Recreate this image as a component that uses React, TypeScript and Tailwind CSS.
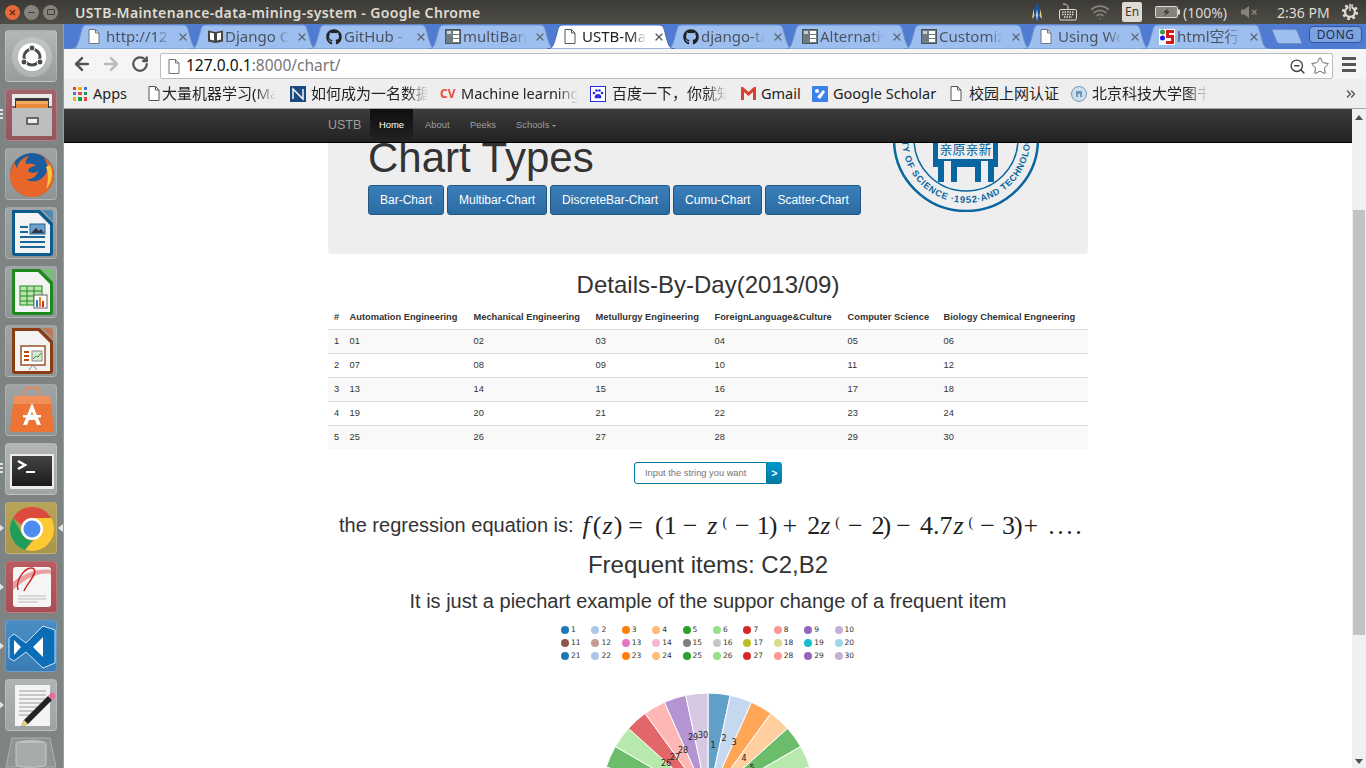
import type { ReactNode } from "react";
import { ArrowLeft, ArrowRight, RotateCw, ZoomOut, Star, Wifi, X, Minus, ChevronsRight } from "lucide-react";
import { FaGithub } from "react-icons/fa";

const COLORS = ["#1f77b4", "#aec7e8", "#ff7f0e", "#ffbb78", "#2ca02c", "#98df8a", "#d62728", "#ff9896", "#9467bd", "#c5b0d5", "#8c564b", "#c49c94", "#e377c2", "#f7b6d2", "#7f7f7f", "#c7c7c7", "#bcbd22", "#dbdb8d", "#17becf", "#9edae5"];

const pieColor = (n: number) => COLORS[(n - 1) % 20];

function PageIcon({ dark = false }: { dark?: boolean }) {
  return (
    <svg width="12" height="15" viewBox="0 0 12 15" className="shrink-0">
      <path d="M1 .5h6.5L11 4v10.5H1z" fill="#fff" stroke={dark ? "#555" : "#6d7480"} />
      <path d="M7.5.5V4H11" fill="none" stroke={dark ? "#555" : "#6d7480"} />
    </svg>
  );
}

function BookIcon() {
  return (
    <svg width="17" height="15" viewBox="0 0 17 15" className="shrink-0">
      <path d="M1 1.5l7.5 1.5L16 1.5v11L8.5 14 1 12.5z" fill="#444" />
      <path d="M3 3.5l4 1v7l-4-1zM14 3.5l-4 1v7l4-1z" fill="#fff" />
    </svg>
  );
}

function ColumnsIcon() {
  return (
    <svg width="16" height="15" viewBox="0 0 16 15" className="shrink-0">
      <rect x=".5" y=".5" width="15" height="14" fill="#6f7a82" stroke="#4b555c" />
      <rect x="8" y="2" width="6" height="3" fill="#fff" />
      <rect x="8" y="6" width="6" height="3" fill="#fff" />
      <rect x="8" y="10" width="6" height="3" fill="#fff" />
      <rect x="2" y="2" width="4" height="3" fill="#c9d0d4" />
    </svg>
  );
}

function H5Icon() {
  return (
    <svg width="16" height="16" viewBox="0 0 16 16" className="shrink-0">
      <rect width="16" height="16" fill="#fff" />
      <circle cx="3.5" cy="3" r="2.5" fill="#3c9a3c" />
      <circle cx="3.5" cy="9" r="2.5" fill="#1c1cd8" />
      <path d="M7 1h8v3h-5v2h5v9H7v-3h5V9H7z" fill="#d81818" />
    </svg>
  );
}

const TABS: { label: string; icon: ReactNode; active?: boolean }[] = [
  { label: "http://12", icon: <PageIcon /> },
  { label: "Django O", icon: <BookIcon /> },
  { label: "GitHub - a", icon: <FaGithub size={16} color="#222" /> },
  { label: "multiBar(", icon: <ColumnsIcon /> },
  { label: "USTB-Mai", icon: <PageIcon dark />, active: true },
  { label: "django-ta", icon: <FaGithub size={16} color="#222" /> },
  { label: "Alternativ", icon: <ColumnsIcon /> },
  { label: "Customiz", icon: <ColumnsIcon /> },
  { label: "Using We", icon: <PageIcon /> },
  { label: "html空行", icon: <H5Icon /> },
];

function Tab({ label, icon, active }: { label: string; icon: ReactNode; active?: boolean }) {
  return (
    <div className={`relative -ml-[9px] flex h-[25px] w-[128px] shrink-0 items-center pl-[17px] ${active ? "z-10" : ""}`}>
      <svg width="128" height="25" viewBox="0 0 128 25" className="absolute left-0 top-0">
        <path d="M0 25c5 0 6-3 8-9l3-11c1-3 2-4 5-4h96c3 0 4 1 5 4l3 11c2 6 3 9 8 9z" fill={active ? "#ffffff" : "#9dbff0"} stroke={active ? "#3f66b8" : "#6f90c8"} />
      </svg>
      <span className="relative flex w-[18px] items-center">{icon}</span>
      <span className={`relative w-[64px] overflow-hidden whitespace-nowrap text-[15px] [mask-image:linear-gradient(to_right,black_78%,transparent)] ${active ? "text-[#222]" : "text-[#4c5360]"}`}>
        {label}
      </span>
      <X size={12} strokeWidth={2.5} className={`relative ml-[7px] ${active ? "text-[#555]" : "text-[#5d6675]"}`} />
    </div>
  );
}

function TopBar() {
  return (
    <div className="flex h-[24px] shrink-0 items-center bg-gradient-to-b from-[#3b3a36] to-[#4e4d46] text-[#dfdbd2]">
      <div className="ml-[5px] flex w-[57px] gap-[4px]">
        <div className="flex h-[15px] w-[15px] items-center justify-center rounded-full bg-[#e9693a]">
          <X size={9} strokeWidth={3} className="text-[#5b2a17]" />
        </div>
        <div className="flex h-[15px] w-[15px] items-center justify-center rounded-full bg-[#85837b]">
          <Minus size={9} strokeWidth={3} className="text-[#3d3c38]" />
        </div>
        <div className="flex h-[15px] w-[15px] items-center justify-center rounded-full bg-[#85837b]">
          <div className="h-[6px] w-[8px] rounded-[1px] border border-[#3d3c38]" />
        </div>
      </div>
      <div className="ml-[13px] w-[956px] text-[14px] font-semibold tracking-[0.35px]">USTB-Maintenance-data-mining-system - Google Chrome</div>
      <svg width="14" height="22" viewBox="0 0 14 22" className="-ml-[1px]">
        <path d="M7 1l3 7-1 10-2 3-2-3-1-10z" fill="#1c4f96" />
        <path d="M7 8l1 6-1 6-1-6z" fill="#cfe0f0" />
        <path d="M3.500 8L2 18l2.500-3zM10.500 8L12 18l-2.500-3z" fill="#e8d090" />
      </svg>
      <svg width="20" height="18" viewBox="0 0 20 18" className="ml-[14px]">
        <path d="M5 1c3 0 5 1 5 3v2" fill="none" stroke="#dfdbd2" />
        <rect x="1.500" y="6.500" width="17" height="10.500" rx="1.500" fill="none" stroke="#dfdbd2" />
        <path d="M4 9h12M4 11.500h12M6 14h8" stroke="#dfdbd2" strokeWidth="1.500" strokeDasharray="1.500 1" />
      </svg>
      <Wifi size={20} strokeWidth={2} className="ml-[12px] text-[#85837b]" />
      <div className="ml-[12px] flex h-[20px] w-[20px] items-center justify-center rounded-[2px] bg-[#dfdbd2] text-[12px] text-[#3c3b37]">En</div>
      <svg width="25" height="12" viewBox="0 0 25 12" className="ml-[13px]">
        <rect x=".5" y=".5" width="22" height="11" rx="1" fill="#85837b" stroke="#dfdbd2" />
        <rect x="23" y="3.500" width="2" height="5" fill="#dfdbd2" />
        <path d="M14 2l-6 4.500h3.500L9 10l6-4.500h-3.500z" fill="#2e2d2a" />
      </svg>
      <div className="ml-[3px] text-[14px]">(100%)</div>
      <svg width="18" height="14" viewBox="0 0 18 14" className="ml-[14px]">
        <path d="M0 4.500h3L8 1v12L3 9.500H0z" fill="#85837b" />
        <path d="M11 5l4.500 4.500M15.500 5L11 9.500" stroke="#85837b" strokeWidth="1.500" />
      </svg>
      <div className="ml-[18px] text-[14px]">2:36 PM</div>
      <svg width="18" height="18" viewBox="0 0 20 20" className="ml-[11px]">
        <circle cx="10" cy="10" r="5.500" fill="none" stroke="#dfdbd2" strokeWidth="2.500" />
        <circle cx="10" cy="10" r="7.500" fill="none" stroke="#dfdbd2" strokeWidth="3" strokeDasharray="3 2.900" />
        <rect x="8.500" y="1" width="3" height="8" fill="#45443f" />
        <rect x="9.200" y="1" width="1.600" height="8" fill="#dfdbd2" />
      </svg>
    </div>
  );
}

const DOCK_BG: string[] = ["from-[#b3b7b7] to-[#979c9c]", "from-[#a0646c] to-[#94545c]", "from-[#a0a4a4] to-[#8f9494]", "from-[#a0a4a4] to-[#8f9494]", "from-[#a0a4a4] to-[#8f9494]", "from-[#a0a4a4] to-[#8f9494]", "from-[#a0a4a4] to-[#8f9494]", "from-[#b3b5b5] to-[#a2a5a5]", "from-[#b8a458] to-[#a8964c]", "from-[#b85c62] to-[#a84e54]", "from-[#4a8cc4] to-[#3a7cb6]", "from-[#b0b3b3] to-[#a0a3a3]"];

const DOCK_PIP: ("bars" | "left" | "both" | null)[] = [null, "bars", null, null, null, null, null, "bars", "both", "left", "left", "left"];

function DocIcon({ main, fold, children }: { main: string; fold: string; children: ReactNode }) {
  return (
    <svg width="52" height="52" viewBox="0 0 52 52">
      <path d="M6 2h28l13 13v30a3 3 0 0 1-3 3H9a3 3 0 0 1-3-3z" fill={main} />
      <path d="M36 2h9a2 2 0 0 1 2 2v9z" fill={fold} />
      <path d="M9 5h23l12 12v28H9z" fill="#f3f3f3" />
      {children}
    </svg>
  );
}

const DOCK_ICONS: ReactNode[] = [
  <svg width="52" height="52" viewBox="0 0 52 52" key="ubuntu">
    <circle cx="26" cy="26" r="20" fill="#e8eaea" opacity=".3" />
    <circle cx="26" cy="26" r="14" fill="#fff" />
    <circle cx="26" cy="26" r="8" fill="none" stroke="#4a4a4a" strokeWidth="3" />
    <circle cx="26" cy="17" r="3" fill="#4a4a4a" stroke="#fff" />
    <circle cx="18" cy="31" r="3" fill="#4a4a4a" stroke="#fff" />
    <circle cx="34" cy="31" r="3" fill="#4a4a4a" stroke="#fff" />
  </svg>,
  <svg width="52" height="52" viewBox="0 0 52 52" key="files">
    <path d="M6 4h40v12H6z" fill="#e8e8e8" />
    <path d="M9 8h34v10H9z" fill="#3a3a3a" />
    <path d="M10 11h32v8H10z" fill="#f4a860" />
    <path d="M10 14h32v5H10z" fill="#e98b3a" />
    <path d="M6 18h40v28H6z" fill="#bdbfbf" />
    <rect x="20" y="27" width="13" height="8" rx="1" fill="#666" />
    <rect x="22" y="29" width="9" height="4" fill="#eee" />
  </svg>,
  <svg width="52" height="52" viewBox="0 0 52 52" key="firefox">
    <circle cx="26" cy="26" r="22" fill="#1b5c9e" />
    <path d="M30 4c10 3 18 12 18 22 0 13-10 22-22 22S4 39 4 27c0-6 2-10 5-14 0 3 1 5 2 6 1-6 6-11 12-12-3 3-4 6-3 8 3-1 8-1 10 2-3 0-7 1-8 5 3 3 7 2 10 0-1 5-6 9-12 8 5 4 14 3 19-4 4-6 2-13-1-17 1-1-3-5-8-5z" fill="#e8662a" />
    <path d="M44 16c4 8 2 18-4 24 2-6 3-14 0-22z" fill="#f8c63a" />
  </svg>,
  <DocIcon main="#0e5c8e" fold="#4f8cb4" key="writer">
    <rect x="14" y="18" width="8" height="2" fill="#1a6698" />
    <rect x="14" y="23" width="8" height="2" fill="#1a6698" />
    <rect x="14" y="28" width="25" height="2" fill="#1a6698" />
    <rect x="14" y="33" width="25" height="2" fill="#1a6698" />
    <rect x="14" y="38" width="25" height="2" fill="#1a6698" />
    <rect x="24" y="16" width="15" height="10" fill="#6ea0cc" stroke="#1a6698" />
    <path d="M25 25l5-5 3 3 2-2 3 4z" fill="#334" />
  </DocIcon>,
  <DocIcon main="#1d8a1d" fold="#71c271" key="calc">
    <rect x="14" y="19" width="22" height="19" fill="#b9e4b0" stroke="#1d8a1d" />
    <path d="M14 24h22M14 29h22M14 34h22M21 19v19M28 19v19" stroke="#1d8a1d" fill="none" />
    <rect x="28" y="28" width="13" height="13" fill="#fff" stroke="#666" />
    <rect x="30" y="33" width="2" height="7" fill="#2a7ac8" />
    <rect x="33" y="30" width="2" height="10" fill="#e87a2a" />
    <rect x="36" y="34" width="2" height="6" fill="#c8382a" />
  </DocIcon>,
  <DocIcon main="#8a3d14" fold="#bb7a55" key="impress">
    <rect x="15" y="20" width="24" height="19" fill="#fff" stroke="#a0502a" strokeWidth="1.5" />
    <rect x="18" y="25" width="5" height="2" fill="#c04a14" />
    <rect x="18" y="29" width="5" height="2" fill="#c04a14" />
    <rect x="18" y="33" width="5" height="2" fill="#c04a14" />
    <rect x="26" y="25" width="10" height="10" fill="#dbe7d5" stroke="#888" />
    <path d="M27 33l3-3 2 1 3-4" stroke="#2a9a2a" fill="none" />
    <path d="M27 39l-4 5M27 39l4 5" stroke="#888" />
  </DocIcon>,
  <svg width="52" height="52" viewBox="0 0 52 52" key="store">
    <path d="M19 13V6a3 3 0 0 1 3-3h8a3 3 0 0 1 3 3v7" fill="none" stroke="#e88a5a" strokeWidth="2" />
    <path d="M8 11h36l4 33a3 3 0 0 1-3 3H7a3 3 0 0 1-3-3z" fill="#ec7434" />
    <path d="M8 11h36l1 8H7z" fill="#f08f57" />
    <path d="M26 18l-9 22h4l2-5h6l2 5h4zM25 30l1-4 1 4z" fill="#fff" />
    <rect x="17" y="30" width="18" height="2.5" fill="#fff" />
  </svg>,
  <svg width="52" height="52" viewBox="0 0 52 52" key="terminal">
    <rect x="4" y="10" width="44" height="35" rx="1" fill="#ececec" />
    <rect x="6" y="12" width="40" height="30" fill="url(#termFill)" />
    <defs>
      <linearGradient id="termFill" x1="0" y1="0" x2="0" y2="1">
        <stop offset="0" stopColor="#444" />
        <stop offset="1" stopColor="#1a1a1a" />
      </linearGradient>
    </defs>
    <path d="M12 17l7 4-7 4" stroke="#fff" strokeWidth="2.5" fill="none" />
    <rect x="20" y="27" width="9" height="2" fill="#fff" />
  </svg>,
  <svg width="52" height="52" viewBox="0 0 52 52" key="chrome">
    <path d="M26 4a22 22 0 0 1 19 11H26a11 11 0 0 0-10 7L7 15A22 22 0 0 1 26 4z" fill="#dd4b3e" />
    <path d="M7 15l9 16a11 11 0 0 0 10 6l-7 10A22 22 0 0 1 7 15z" fill="#1f9e5a" />
    <path d="M45 15a22 22 0 0 1-19 33l-7-1 10-11a11 11 0 0 0 6-8 11 11 0 0 0-9-13z" fill="#fcc934" />
    <circle cx="26" cy="26" r="11" fill="#fff" />
    <circle cx="26" cy="26" r="8.5" fill="#4e8cf0" />
  </svg>,
  <svg width="52" height="52" viewBox="0 0 52 52" key="reader">
    <rect x="7" y="5" width="38" height="40" rx="3" fill="#f5f5f5" />
    <path d="M45 12C33 10 20 16 7 28v-8C20 10 33 6 45 8z" fill="#e8a0a0" />
    <path d="M12 28C9 16 22 2 28 7c4 4-8 16-10 22" fill="none" stroke="#cc2a2a" strokeWidth="1.5" />
    <path d="M12 34h28M12 37h28M12 40h20" stroke="#bbb" />
  </svg>,
  <svg width="52" height="52" viewBox="0 0 52 52" key="vscode">
    <path d="M3 17l5-4 12 9 17-17 12 4v33l-12 5-17-16-12 9-5-3z" fill="#0a6db5" stroke="#cfe3f2" />
    <path d="M8 19l7 7-7 8zM37 16v20L27 26z" fill="#fff" />
  </svg>,
  <svg width="52" height="52" viewBox="0 0 52 52" key="gedit">
    <rect x="9" y="5" width="35" height="41" fill="#f4f4f4" />
    <path d="M13 11h27M13 15h27M13 19h27M13 23h22M13 27h18M13 31h14M13 35h10" stroke="#999" />
    <path d="M46 20l-4-4-24 24-3 7 7-3z" fill="#222" />
    <path d="M42 16l4-4 4 4-4 4z" fill="#e86aa0" />
    <path d="M18 40l-3 7 7-3z" fill="#f0d080" />
  </svg>,
];

function Launcher() {
  return (
    <div className="flex w-[64px] shrink-0 flex-col items-center gap-[7px] border-r border-[#9a9d9d] bg-[#7e8383] pt-[6px] pr-[1px]">
      {DOCK_ICONS.map((icon, i) => (
        <div key={i} className="relative h-[52px] w-[52px] shrink-0">
          <div className={`h-full w-full overflow-hidden rounded-[4px] border border-[#ffffff30] bg-gradient-to-b ${DOCK_BG[i]}`}>{icon}</div>
          {DOCK_PIP[i] === "bars" && (
            <div className="absolute -left-[6px] top-[20px] flex w-[4px] flex-col gap-[2px]">
              <div className="h-[2px] bg-[#e4e4e4]" />
              <div className="h-[2px] bg-[#e4e4e4]" />
              <div className="h-[2px] bg-[#e4e4e4]" />
            </div>
          )}
          {(DOCK_PIP[i] === "left" || DOCK_PIP[i] === "both") && (
            <div className="absolute -left-[6px] top-[22px] h-0 w-0 border-y-[4px] border-l-[5px] border-y-transparent border-l-[#e4e4e4]" />
          )}
          {DOCK_PIP[i] === "both" && (
            <div className="absolute -right-[6px] top-[22px] h-0 w-0 border-y-[4px] border-r-[5px] border-y-transparent border-r-[#e4e4e4]" />
          )}
        </div>
      ))}
      <svg width="52" height="34" viewBox="0 0 52 34" className="-mt-[1px] shrink-0">
        <path d="M7 1h38l6 29H1z" fill="#8f9494" stroke="#aeb1b1" />
        <ellipse cx="26" cy="6" rx="15" ry="3" fill="#c0c2c2" />
        <path d="M11 6v22c5 3 25 3 30 0V6" fill="#a8abab" stroke="#c8caca" />
      </svg>
    </div>
  );
}

function Toolbar() {
  return (
    <div className="flex h-[30px] shrink-0 items-center bg-[#f5f5f5] pl-[8px]">
      <ArrowLeft size={20} strokeWidth={3} className="text-[#555]" />
      <ArrowRight size={20} strokeWidth={3} className="ml-[9px] text-[#bbb]" />
      <RotateCw size={18} strokeWidth={3} className="ml-[10px] text-[#555]" />
      <div className="ml-[11px] mt-[4px] flex h-[26px] w-[1173px] items-center rounded-[2px] border border-[#bdbdbd] bg-white pl-[7px]">
        <PageIcon />
        <span className="ml-[6px] text-[15.500px] text-[#111]">127.0.0.1</span>
        <span className="text-[15.500px] text-[#777]">:8000/chart/</span>
        <ZoomOut size={17} strokeWidth={2} className="ml-auto text-[#444]" />
        <Star size={20} strokeWidth={1.2} className="ml-[4px] mr-[2px] text-[#666]" />
      </div>
      <div className="ml-[9px] flex w-[14px] flex-col gap-[3px]">
        <div className="h-[3px] bg-[#555]" />
        <div className="h-[3px] bg-[#555]" />
        <div className="h-[3px] bg-[#555]" />
      </div>
    </div>
  );
}

function AppsIcon() {
  const c = ["#e8453c", "#f4b400", "#3b78e7", "#3b78e7", "#e8453c", "#0f9d58", "#f4b400", "#0f9d58", "#e8453c"];
  return (
    <div className="grid h-[14px] w-[14px] shrink-0 grid-cols-3 gap-[2px]">
      {c.map((col, i) => (
        <div key={i} style={{ background: col }} />
      ))}
    </div>
  );
}

function Fade({ children, className }: { children: ReactNode; className: string }) {
  return <span className={`shrink-0 overflow-hidden whitespace-nowrap [mask-image:linear-gradient(to_right,black_82%,transparent)] ${className}`}>{children}</span>;
}

function Bookmarks() {
  return (
    <div className="flex h-[30px] shrink-0 items-center border-b border-[#a5a5a5] bg-[#eeeeee] pl-[9px] text-[15px] text-[#222]">
      <AppsIcon />
      <span className="ml-[6px] w-[55px] text-[14.500px]">Apps</span>
      <PageIcon dark />
      <Fade className="ml-[2px] w-[114px]">大量机器学习(Ma</Fade>
      <svg width="16" height="16" viewBox="0 0 16 16" className="ml-[14px] shrink-0">
        <rect width="16" height="16" fill="#1a4a80" />
        <path d="M3 13V3l10 10V3" stroke="#fff" fill="none" strokeWidth="1.4" />
      </svg>
      <Fade className="ml-[5px] w-[117px]">如何成为一名数据</Fade>
      <span className="ml-[12px] w-[21px] text-[12px] font-bold text-[#e8503a]">CV</span>
      <Fade className="w-[117px] text-[14.500px]">Machine learning</Fade>
      <svg width="16" height="16" viewBox="0 0 16 16" className="ml-[12px] shrink-0">
        <rect x=".5" y=".5" width="15" height="15" fill="#fff" stroke="#2a2ae0" />
        <path d="M8 8c-3 0-4 3-3 4 1 1 2 0 3 0s2 1 3 0c1-1 0-4-3-4z" fill="#2a2ae0" />
        <circle cx="4" cy="7" r="1.3" fill="#2a2ae0" />
        <circle cx="6.5" cy="4.5" r="1.3" fill="#2a2ae0" />
        <circle cx="9.5" cy="4.5" r="1.3" fill="#2a2ae0" />
        <circle cx="12" cy="7" r="1.3" fill="#2a2ae0" />
      </svg>
      <Fade className="ml-[6px] w-[115px]">百度一下，你就知</Fade>
      <svg width="15" height="13" viewBox="0 0 15 13" className="ml-[14px] shrink-0">
        <path d="M0 0h2l5.500 5L13 0h2v13h-3V5L7.500 9 3 5v8H0z" fill="#d9412f" />
      </svg>
      <span className="ml-[5px] w-[40px] text-[14.500px]">Gmail</span>
      <svg width="16" height="16" viewBox="0 0 16 16" className="ml-[11px] shrink-0">
        <rect width="16" height="16" rx="1" fill="#3b82e8" />
        <path d="M5 11l6-7 2 2-5 7z" fill="#fff" />
        <circle cx="5" cy="5" r="2" fill="#fff" />
      </svg>
      <span className="ml-[5px] w-[117px] whitespace-nowrap text-[14.500px]">Google Scholar</span>
      <PageIcon dark />
      <span className="ml-[7px] w-[102px]">校园上网认证</span>
      <svg width="16" height="16" viewBox="0 0 16 16" className="shrink-0">
        <circle cx="8" cy="8" r="7.500" fill="#cfe0ea" stroke="#6e9ab8" />
        <path d="M5 5h6v3H5zM5 8h2v3H5zM9 8h2v3H9z" fill="#6e9ab8" />
      </svg>
      <Fade className="ml-[5px] w-[116px]">北京科技大学图书</Fade>
      <ChevronsRight size={14} strokeWidth={2.5} className="ml-[136px] text-[#555]" />
    </div>
  );
}

function TabStrip() {
  return (
    <div className="flex h-[25px] shrink-0 items-end bg-[#4f7cd2] pl-[16px]">
      {TABS.map((t) => (
        <Tab key={t.label} {...t} />
      ))}
      <svg width="34" height="15" viewBox="0 0 34 15" className="mb-[5px] shrink-0">
        <path d="M2 .5h22c2 0 3 1 4 4l4 10H10c-2 0-3-1-4-4z" fill="#9dbff0" stroke="#6f90c8" />
      </svg>
      <div className="mb-[6px] ml-[5px] flex h-[17px] w-[53px] items-center justify-center rounded-[4px] border border-[#2f55a0] bg-[#7da2e2] text-[12px] tracking-[0.4px] text-[#20304f]">DONG</div>
    </div>
  );
}

function Navbar() {
  return (
    <div className="h-[34px] shrink-0 border-b border-black bg-gradient-to-b from-[#3c3c3c] to-[#222222] font-['Liberation_Sans',sans-serif]">
      <div className="mx-auto flex h-full w-[760px] items-center">
        <span className="w-[42px] text-[12.500px] text-[#9d9d9d]">USTB</span>
        <span className="flex h-full w-[43px] items-center justify-center bg-gradient-to-b from-[#0f0f0f] to-[#232323] text-[9.400px] text-white">Home</span>
        <span className="ml-[12px] w-[45px] text-[9.400px] text-[#9d9d9d]">About</span>
        <span className="w-[46px] text-[9.400px] text-[#9d9d9d]">Peeks</span>
        <span className="text-[9.400px] text-[#9d9d9d]">Schools</span>
        <span className="ml-[3px] mt-[1px] h-0 w-0 border-x-[2px] border-t-[2px] border-x-transparent border-t-[#9d9d9d]" />
      </div>
    </div>
  );
}

function UstbLogo() {
  const sealFont = "'Liberation Sans',sans-serif";
  return (
    <svg width="146" height="146" viewBox="0 0 146 146" className="ml-auto mr-[49px] -mt-[77px] shrink-0">
      <defs>
        <path id="sealText" d="M9 73a64 64 0 0 0 128 0" />
      </defs>
      <circle cx="73" cy="73" r="72" fill="none" stroke="#0a66a0" strokeWidth="2.500" />
      <circle cx="73" cy="73" r="52" fill="none" stroke="#0a66a0" strokeWidth="1.500" />
      <text fontFamily={sealFont} fontSize="9" fontWeight="700" fill="#0a66a0" letterSpacing=".8">
        <textPath href="#sealText" startOffset="44%" textAnchor="end">UNIVERSITY OF SCIENCE ·</textPath>
      </text>
      <text fontFamily={sealFont} fontSize="9.500" fontWeight="700" fill="#0a66a0" letterSpacing="1">
        <textPath href="#sealText" startOffset="50%" textAnchor="middle">1952</textPath>
      </text>
      <text fontFamily={sealFont} fontSize="9" fontWeight="700" fill="#0a66a0" letterSpacing=".6">
        <textPath href="#sealText" startOffset="56%" textAnchor="start">·AND TECHNOLOGY</textPath>
      </text>
      <path d="M40 50h5v43h55V50h5v51h-4v15H82v-15H64v15H45v-15h-5z" fill="#0a66a0" />
      <rect x="51" y="95" width="7" height="21" fill="#eeeeee" />
      <rect x="88" y="95" width="7" height="21" fill="#eeeeee" />
      <text x="72.500" y="88" textAnchor="middle" fontFamily="'Noto Sans CJK SC',sans-serif" fontSize="13" fill="#0a66a0">亲原亲新</text>
    </svg>
  );
}

const HEAD = ["#", "Automation Engineering", "Mechanical Engineering", "Metullurgy Engineering", "ForeignLanguage&Culture", "Computer Science", "Biology Chemical Engneering"];

const ROWS = [
  ["1", "01", "02", "03", "04", "05", "06"],
  ["2", "07", "08", "09", "10", "11", "12"],
  ["3", "13", "14", "15", "16", "17", "18"],
  ["4", "19", "20", "21", "22", "23", "24"],
  ["5", "25", "26", "27", "28", "29", "30"],
];

function DataTable() {
  return (
    <table className="w-[760px] table-fixed border-collapse text-[9.300px] text-[#333]">
      <colgroup>
        <col className="w-[16.500px]" />
        <col className="w-[124px]" />
        <col className="w-[122px]" />
        <col className="w-[119px]" />
        <col className="w-[133px]" />
        <col className="w-[96px]" />
        <col />
      </colgroup>
      <thead>
        <tr className="h-[24px] border-b-[1.500px] border-[#dddddd]">
          {HEAD.map((h, j) => (
            <th key={h} className={`whitespace-nowrap pt-[2px] text-left font-bold ${j === 0 ? "pl-[6px]" : "pl-[5px]"}`}>
              {h}
            </th>
          ))}
        </tr>
      </thead>
      <tbody>
        {ROWS.map((r, i) => (
          <tr key={r[0]} className={`h-[24px] ${i < 4 ? "border-b border-[#dddddd]" : ""} ${i % 2 === 0 ? "bg-[#f9f9f9]" : ""}`}>
            {r.map((c, j) => (
              <td key={j} className={`pt-[2px] ${j === 0 ? "pl-[6px]" : "pl-[5px]"}`}>
                {c}
              </td>
            ))}
          </tr>
        ))}
      </tbody>
    </table>
  );
}

function Equation() {
  return (
    <div className="mt-[26px] flex h-[30px] items-center pl-[11px] text-[20px] text-[#333]">
      <span>the regression equation is:</span>
      <span className="ml-[9px] flex items-baseline whitespace-nowrap font-['Liberation_Serif',serif] text-[26px] text-[#222]">
        <i>f</i>
        <span className="ml-[3px]">(</span>
        <i className="ml-[1px]">z</i>
        <span className="ml-[1px]">)</span>
        <span className="ml-[6px]">=</span>
        <span className="ml-[12px]">(1</span>
        <span className="ml-[6px]">−</span>
        <i className="ml-[10px]">z</i>
        <sup className="ml-[5px] text-[14px]">(</sup>
        <span className="ml-[8px]">−</span>
        <span className="ml-[7px]">1</span>
        <span className="-ml-[1px]">)</span>
        <span className="ml-[5px]">+</span>
        <span className="ml-[10px]">2</span>
        <i>z</i>
        <sup className="ml-[5px] text-[14px]">(</sup>
        <span className="ml-[8px]">−</span>
        <span className="ml-[9px]">2</span>
        <span className="-ml-[2px]">)</span>
        <span className="ml-[5px]">−</span>
        <span className="ml-[9px]">4.7</span>
        <i className="ml-[1px]">z</i>
        <sup className="ml-[5px] text-[14px]">(</sup>
        <span className="ml-[7px]">−</span>
        <span className="ml-[7px]">3</span>
        <span className="-ml-[1px]">)</span>
        <span className="ml-[1px]">+</span>
        <span className="ml-[10px] tracking-[2.500px]">....</span>
      </span>
    </div>
  );
}

function Legend() {
  const nums = Array.from({ length: 30 }, (_, i) => i + 1);
  return (
    <div className="ml-[233px] mt-[9px] grid w-[304px] grid-cols-10 font-['DejaVu_Sans',sans-serif] text-[7.500px] text-[#333]">
      {nums.map((n) => (
        <div key={n} className="flex h-[13px] items-center gap-[2px]">
          <span className="h-[8px] w-[8px] shrink-0 rounded-full" style={{ background: pieColor(n) }} />
          <span>{n}</span>
        </div>
      ))}
    </div>
  );
}

const PIE_LABELS: [number, number, number][] = [
  [1, 713, 745], [2, 724, 738], [3, 734, 742], [4, 744, 758], [5, 752, 768],
  [30, 703, 735], [29, 693, 737], [28, 683, 750], [27, 675, 757], [26, 666, 763],
];

function Pie() {
  const R = 107;
  const cx = 120;
  const cy = 107;
  const wedges = Array.from({ length: 30 }, (_, i) => {
    const a0 = (i * 12 * Math.PI) / 180;
    const a1 = ((i + 1) * 12 * Math.PI) / 180;
    const d = `M${cx} ${cy}L${cx + R * Math.sin(a0)} ${cy - R * Math.cos(a0)}A${R} ${R} 0 0 1 ${cx + R * Math.sin(a1)} ${cy - R * Math.cos(a1)}Z`;
    return <path key={i} d={d} fill={pieColor(i + 1)} fillOpacity={0.7} stroke="#fff" />;
  });
  return (
    <svg width="240" height="75" viewBox="0 0 240 75" className="mx-auto mt-[31px] shrink-0">
      {wedges}
      {PIE_LABELS.map(([n, x, y]) => (
        <text key={n} x={x - 588} y={y - 693 + 3} textAnchor="middle" fontSize="8" fontFamily="'DejaVu Sans',sans-serif" fill="#222">
          {n}
        </text>
      ))}
    </svg>
  );
}

function Page() {
  return (
    <div className="mx-auto flex w-[760px] flex-col font-['Liberation_Sans',sans-serif] text-[#333]">
      <div className="flex h-[111px] shrink-0 overflow-hidden rounded-b-[4px] bg-[#eeeeee] pl-[40px]">
        <div className="shrink-0">
          <div className="-mt-[8px] h-[46px] text-[42px] leading-[46px]">Chart Types</div>
          <div className="mt-[4px] flex gap-[3px]">
            {["Bar-Chart", "Multibar-Chart", "DiscreteBar-Chart", "Cumu-Chart", "Scatter-Chart"].map((b) => (
              <button key={b} className="h-[30px] rounded-[3px] border border-[#245580] bg-gradient-to-b from-[#3a7fba] to-[#2b6ba2] px-[11px] text-[12px] text-white">
                {b}
              </button>
            ))}
          </div>
        </div>
        <UstbLogo />
      </div>
      <h3 className="mt-[15px] h-[32px] text-center text-[24px] leading-[32px]">Details-By-Day(2013/09)</h3>
      <div className="mt-[4px]">
        <DataTable />
      </div>
      <div className="mx-auto mt-[13px] flex h-[22px] w-[148px] shrink-0">
        <div className="flex w-[133px] items-center rounded-l-[3px] border border-[#0078a0] pl-[10px] pt-[2px] text-[9.300px] text-[#757575]">Input the string you want</div>
        <div className="flex w-[15px] items-center justify-center rounded-r-[3px] bg-gradient-to-b from-[#009ad0] to-[#0078a0] text-[10px] font-bold text-white">&gt;</div>
      </div>
      <Equation />
      <div className="mt-[10px] h-[30px] text-center text-[24px] leading-[30px]">Frequent items: C2,B2</div>
      <div className="mt-[8px] h-[26px] text-center text-[20px] leading-[26px]">It is just a piechart example of the suppor change of a frequent item</div>
      <Legend />
      <Pie />
    </div>
  );
}

function Scrollbar() {
  return (
    <div className="flex w-[14px] shrink-0 flex-col items-center bg-[#f0f0f0]">
      <div className="mt-[6px] h-0 w-0 border-x-[4px] border-b-[5px] border-x-transparent border-b-[#505050]" />
      <div className="mt-[90px] h-[425px] w-[12px] bg-[#c3c3c3]" />
      <div className="mb-[4px] mt-auto h-0 w-0 border-x-[4px] border-t-[5px] border-x-transparent border-t-[#505050]" />
    </div>
  );
}

export default function App() {
  return (
    <div className="flex h-[768px] w-[1366px] flex-col overflow-hidden bg-white font-['Noto_Sans','Noto_Sans_CJK_SC',sans-serif]">
      <TopBar />
      <div className="flex min-h-0 flex-1">
        <Launcher />
        <div className="flex min-w-0 flex-1 flex-col">
          <TabStrip />
          <Toolbar />
          <Bookmarks />
          <div className="flex min-h-0 flex-1">
            <div className="flex min-w-0 flex-1 flex-col overflow-hidden">
              <Navbar />
              <Page />
            </div>
            <Scrollbar />
          </div>
        </div>
      </div>
    </div>
  );
}
